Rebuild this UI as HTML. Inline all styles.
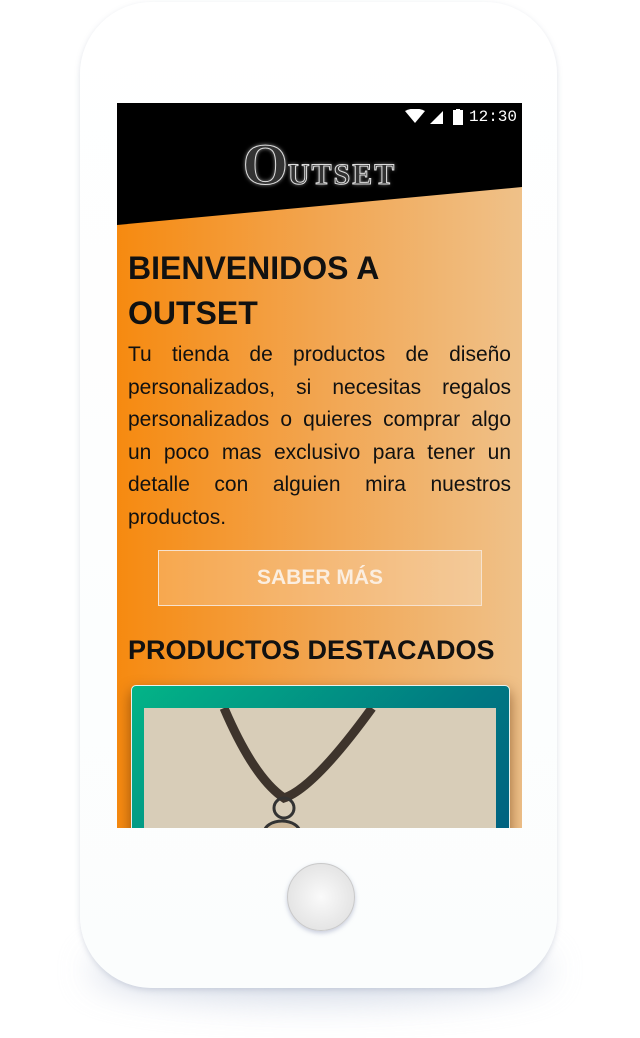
<!DOCTYPE html>
<html><head><meta charset="utf-8"><style>
html,body{margin:0;padding:0;width:640px;height:1038px;background:#fff;overflow:hidden;font-family:"Liberation Sans",sans-serif}
.shadow{position:absolute;left:90px;top:940px;width:460px;height:60px;border-radius:50%;background:#c8d0e0;filter:blur(18px);opacity:.8}
.phone{position:absolute;left:80px;top:2px;width:477px;height:986px;border-radius:72px;background:linear-gradient(#fff,#fbfdfd);box-shadow:0 2px 6px rgba(120,130,160,.25)}
.home{position:absolute;left:287px;top:863px;width:66px;height:66px;border-radius:50%;background:radial-gradient(circle at 50% 50%,#fafafa,#dcdcdc);border:1px solid #c9c9c9;box-shadow:0 2px 5px rgba(120,130,170,.4)}
.screen{position:absolute;left:117px;top:103px;width:405px;height:725px;overflow:hidden;background:linear-gradient(90deg,#f68a10 0%,#f2a550 50%,#efc189 100%)}
.status{position:absolute;left:0;top:0;width:405px;height:27px;background:#000;color:#fff;font-family:"Liberation Mono",monospace;font-size:16px}
.hdr{position:absolute;left:0;top:26px;width:405px;height:100px;background:#000;clip-path:polygon(0 0,100% 0,100% 58px,0 96px)}
.logo{position:absolute;left:0;width:405px;top:28px;text-align:center;font-family:"Liberation Serif",serif;color:#333;-webkit-text-stroke:1px #ddd;text-shadow:0 0 4px #aaa;font-weight:bold}
h1{position:absolute;left:11px;top:143px;margin:0;font-size:32px;line-height:45px;font-weight:bold;color:#111}
.p{position:absolute;left:11px;top:236px;width:383px;font-size:21px;line-height:32.5px;color:#111}
.p div{text-align:justify;text-align-last:justify;white-space:nowrap}
.p div.l{text-align-last:left}
.btn{position:absolute;left:41px;top:447px;width:322px;height:54px;border:1px solid #f6e2cf;background:rgba(255,255,255,.22);color:#fbeee0;font-weight:bold;font-size:21px;text-align:center;line-height:54px}
h2{position:absolute;left:11px;top:532px;margin:0;font-size:27px;font-weight:bold;color:#111}
.card{position:absolute;left:14px;top:582px;width:377px;height:200px;border-radius:5px;background:linear-gradient(135deg,#03b487,#007a82 60%,#005a80);border:1px solid #e9f2ee;box-shadow:0 6px 14px rgba(90,40,0,.6)}
.img{position:absolute;left:12px;top:22px;width:352px;height:200px;background:#d8cdb8}
</style></head><body>
<div class="shadow"></div>
<div class="phone"></div>
<div class="home"></div>
<div class="screen">
 <div class="hdr"></div>
 <div class="status">
  <svg style="position:absolute;left:288px;top:6px" width="60" height="16">
   <path d="M0 2 Q10 -3 20 2 L10 14 Z" fill="#fff"/>
   <path d="M25 15 L38 2 L38 15 Z" fill="#fff"/>
   <rect x="48" y="1" width="10" height="15" fill="#fff"/><rect x="51" y="0" width="4" height="2" fill="#fff"/>
  </svg>
  <span style="position:absolute;left:352px;top:5px">12:30</span>
 </div>
 <div class="logo"><span style="font-size:58px">O</span><span style="font-size:30px;letter-spacing:2px">UTSET</span></div>
 <h1>BIENVENIDOS A<br>OUTSET</h1>
 <div class="p">
  <div>Tu tienda de productos de diseño</div>
  <div>personalizados, si necesitas regalos</div>
  <div>personalizados o quieres comprar algo</div>
  <div>un poco mas exclusivo para tener un</div>
  <div>detalle con alguien mira nuestros</div>
  <div class="l">productos.</div>
 </div>
 <div class="btn">SABER MÁS</div>
 <h2>PRODUCTOS DESTACADOS</h2>
 <div class="card"><div class="img">
  <svg width="352" height="200"><path d="M80 0 Q110 70 140 90 Q170 80 228 0" stroke="#3e342c" stroke-width="9" fill="none"/><circle cx="140" cy="100" r="10" stroke="#333" stroke-width="3" fill="none"/><ellipse cx="138" cy="125" rx="18" ry="12" fill="#cdb89a" stroke="#333" stroke-width="3"/></svg>
 </div></div>
</div>
</body></html>
